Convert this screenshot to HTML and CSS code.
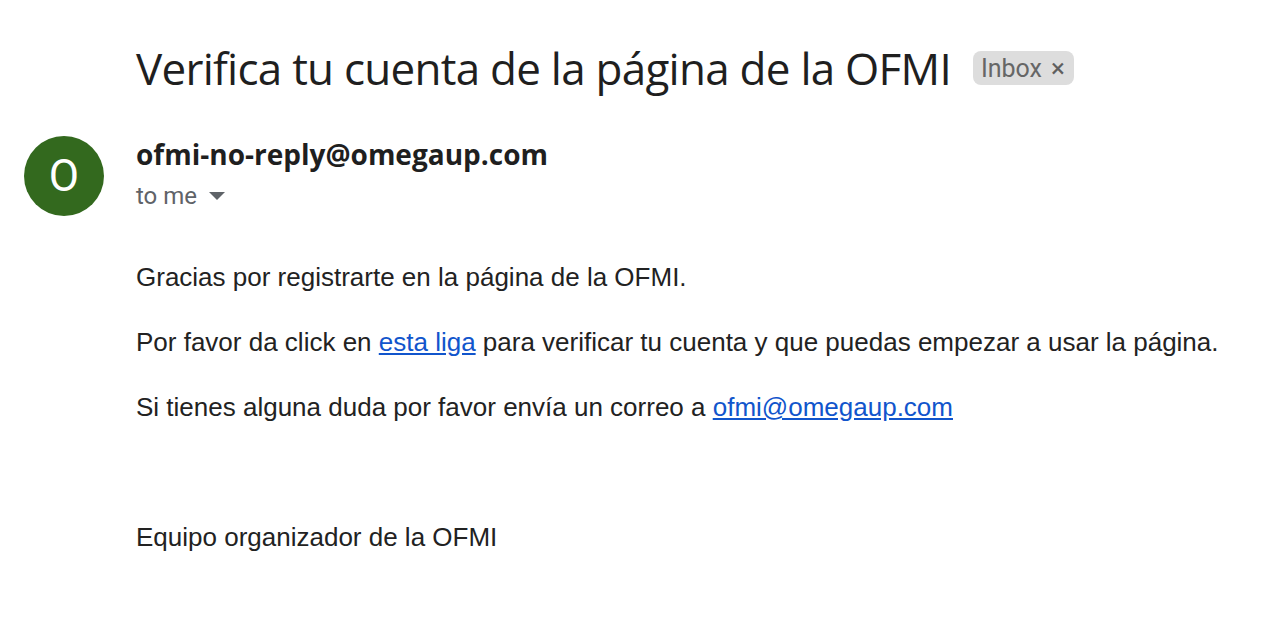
FILE: index.html
```html
<!DOCTYPE html>
<html lang="es">
<head>
<meta charset="utf-8">
<title>Verifica tu cuenta de la página de la OFMI</title>
<link rel="stylesheet" href="styles.css">
</head>
<body>
<div class="page">
  <div class="subject-row">
    <h1 class="subject">Verifica tu cuenta de la página de la OFMI</h1>
    <span class="chip">Inbox <span class="chip-x">×</span></span>
  </div>
  <div class="message">
    <div class="avatar">O</div>
    <div class="content">
      <div class="sender">ofmi-no-reply@omegaup.com</div>
      <div class="recipient">to me <svg class="caret" width="20" height="10" viewBox="0 0 20 10"><path d="M2 1 L18 1 L10 9 Z" fill="#5f6368"/></svg></div>
      <div class="body">
        <p>Gracias por registrarte en la página de la OFMI.</p>
        <p>Por favor da click en <a href="#">esta liga</a> para verificar tu cuenta y que puedas empezar a usar la página.</p>
        <p>Si tienes alguna duda por favor envía un correo a <a href="#">ofmi@omegaup.com</a></p>
        <p class="sign">Equipo organizador de la OFMI</p>
      </div>
    </div>
  </div>
</div>
</body>
</html>
```
FILE: styles.css
```css
html, body {
  margin: 0;
  padding: 0;
  background: #ffffff;
}
.page {
  width: 1262px;
  height: 618px;
  overflow: hidden;
}
.subject-row {
  display: flex;
  align-items: center;
  padding: 40px 0 0 136px;
  height: 56px;
}
.subject {
  margin: 0;
  font-family: "Open Sans", sans-serif;
  font-weight: 400;
  font-size: 44px;
  line-height: 56px;
  color: #1f1f1f;
  letter-spacing: -0.75px;
}
.chip {
  margin-left: 22px;
  background: #dddddd;
  border-radius: 8px;
  height: 34px;
  padding: 0 9px 0 8px;
  display: flex;
  align-items: center;
  font-family: "Roboto", "Liberation Sans", sans-serif;
  font-size: 25px;
  color: #666666;
}
.chip-x {
  margin-left: 9px;
  font-size: 26px;
  color: #5f5f5f;
}
.message {
  display: flex;
  padding: 40px 0 0 24px;
}
.avatar {
  width: 80px;
  height: 80px;
  border-radius: 50%;
  background: #33691e;
  color: #ffffff;
  font-family: "Roboto", "Liberation Sans", sans-serif;
  font-size: 44px;
  display: flex;
  align-items: center;
  justify-content: center;
  flex: none;
}
.content {
  margin-left: 32px;
}
.sender {
  font-family: "Open Sans", "Roboto", sans-serif;
  font-weight: 700;
  font-size: 28px;
  line-height: 40px;
  color: #1f1f1f;
  margin-top: -2px;
}
.recipient {
  font-family: "Roboto", "Liberation Sans", sans-serif;
  font-size: 24px;
  line-height: 40px;
  color: #5f6368;
  display: flex;
  align-items: center;
  padding-top: 2px;
}
.caret {
  margin-left: 10px;
}
.body {
  margin-top: 41px;
  font-family: "Liberation Sans", Arial, sans-serif;
  font-size: 26px;
  line-height: 41px;
  color: #222222;
}
.body p {
  margin: 0 0 24px 0;
}
.body a {
  color: #1155cc;
  text-decoration: underline;
}
.body .sign {
  margin-top: 89px;
}
```
